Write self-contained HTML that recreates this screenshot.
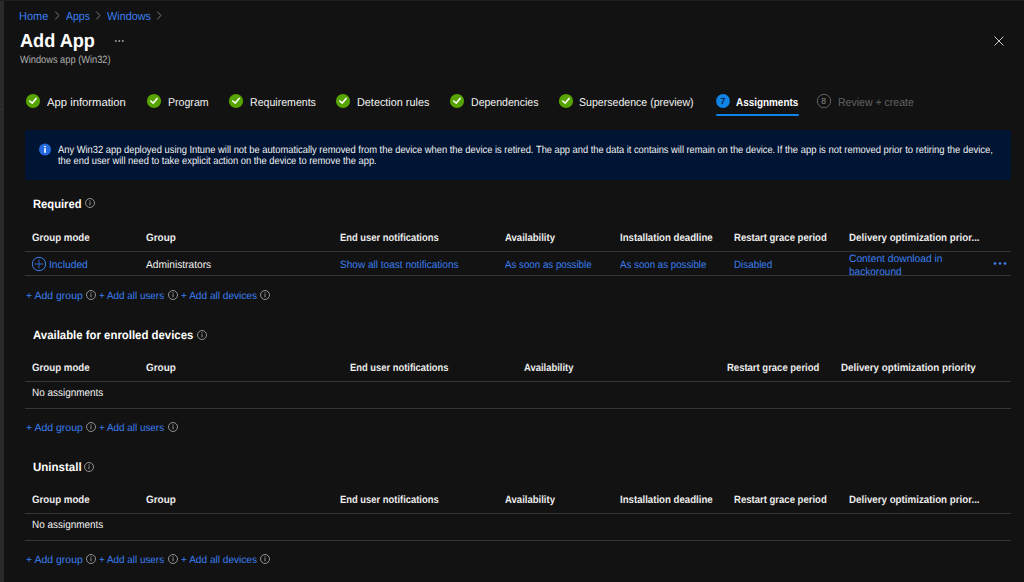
<!DOCTYPE html>
<html><head><meta charset="utf-8"><title>Add App</title>
<style>
html,body{margin:0;padding:0;}
body{width:1024px;height:582px;overflow:hidden;background:#121212;position:relative;font-family:"Liberation Sans",sans-serif;}
.t{position:absolute;white-space:nowrap;line-height:1;transform-origin:0 0;text-rendering:geometricPrecision;}
.a{position:absolute;}
</style></head><body>
<div class="a" style="left:0;top:0;width:1024px;height:1px;background:#1e1e1e"></div>
<div class="a" style="left:0;top:1px;width:4px;height:581px;background:#2a2a28"></div>
<div class="a" style="left:0;top:109px;width:4px;height:1px;background:#333331"></div>
<svg class="a" style="left:53.8px;top:11px" width="8" height="10"><polyline points="1.3,0.6 4.9,4.5 1.3,8.4" fill="none" stroke="#7a7a7a" stroke-width="1"/></svg>
<svg class="a" style="left:95.3px;top:11px" width="8" height="10"><polyline points="1.3,0.6 4.9,4.5 1.3,8.4" fill="none" stroke="#7a7a7a" stroke-width="1"/></svg>
<svg class="a" style="left:156.2px;top:11px" width="8" height="10"><polyline points="1.3,0.6 4.9,4.5 1.3,8.4" fill="none" stroke="#7a7a7a" stroke-width="1"/></svg>
<svg class="a" style="left:113px;top:38px" width="14" height="6"><circle cx="2.8" cy="3" r="1.0" fill="#9a9a9a"/><circle cx="6.3" cy="3" r="1.0" fill="#9a9a9a"/><circle cx="9.8" cy="3" r="1.0" fill="#9a9a9a"/></svg>
<svg class="a" style="left:992.5px;top:35px" width="12" height="12"><path d="M1.5 1.5 L10.5 10.5 M10.5 1.5 L1.5 10.5" stroke="#c8c8c8" stroke-width="1"/></svg>
<svg class="a" style="left:24.9px;top:93px" width="16" height="16"><circle cx="8" cy="8" r="7.1" fill="#57a300"/><polyline points="4.7,8.0 7.3,10.1 11.1,5.4" fill="none" stroke="#ffffff" stroke-width="1.6" stroke-linecap="round" stroke-linejoin="round"/></svg>
<svg class="a" style="left:145.9px;top:93px" width="16" height="16"><circle cx="8" cy="8" r="7.1" fill="#57a300"/><polyline points="4.7,8.0 7.3,10.1 11.1,5.4" fill="none" stroke="#ffffff" stroke-width="1.6" stroke-linecap="round" stroke-linejoin="round"/></svg>
<svg class="a" style="left:228.1px;top:93px" width="16" height="16"><circle cx="8" cy="8" r="7.1" fill="#57a300"/><polyline points="4.7,8.0 7.3,10.1 11.1,5.4" fill="none" stroke="#ffffff" stroke-width="1.6" stroke-linecap="round" stroke-linejoin="round"/></svg>
<svg class="a" style="left:335.2px;top:93px" width="16" height="16"><circle cx="8" cy="8" r="7.1" fill="#57a300"/><polyline points="4.7,8.0 7.3,10.1 11.1,5.4" fill="none" stroke="#ffffff" stroke-width="1.6" stroke-linecap="round" stroke-linejoin="round"/></svg>
<svg class="a" style="left:449.1px;top:93px" width="16" height="16"><circle cx="8" cy="8" r="7.1" fill="#57a300"/><polyline points="4.7,8.0 7.3,10.1 11.1,5.4" fill="none" stroke="#ffffff" stroke-width="1.6" stroke-linecap="round" stroke-linejoin="round"/></svg>
<svg class="a" style="left:558.3px;top:93px" width="16" height="16"><circle cx="8" cy="8" r="7.1" fill="#57a300"/><polyline points="4.7,8.0 7.3,10.1 11.1,5.4" fill="none" stroke="#ffffff" stroke-width="1.6" stroke-linecap="round" stroke-linejoin="round"/></svg>
<svg class="a" style="left:714.8px;top:93px" width="16" height="16"><circle cx="8" cy="8" r="6.9" fill="#0f84e6"/><text x="7.8" y="10.9" font-family="Liberation Sans" font-size="8.6" font-weight="700" fill="#0b1d3d" text-anchor="middle">7</text></svg>
<svg class="a" style="left:815.9px;top:93px" width="16" height="16"><circle cx="8" cy="8" r="6.7" fill="none" stroke="#6a6a6a" stroke-width="0.9"/><text x="7.7" y="11" font-family="Liberation Sans" font-size="8.6" fill="#8a8a8a" text-anchor="middle">8</text></svg>
<div class="a" style="left:715.5px;top:113.5px;width:83px;height:2px;border-radius:1px;background:#0f84e6"></div>
<div class="a" style="left:25px;top:130px;width:986px;height:50px;border-radius:2px;background:#001433"></div>
<svg class="a" style="left:38px;top:143px" width="14" height="14"><circle cx="7" cy="6.5" r="6" fill="#2469e0"/><rect x="6.2" y="5.2" width="1.6" height="4.6" fill="#fff"/><circle cx="7" cy="3.6" r="0.9" fill="#fff"/></svg>
<svg class="a" style="left:85.0px;top:198.4px" width="10" height="10"><circle cx="5" cy="5" r="4.5" fill="none" stroke="#a0a0a0" stroke-width="0.9"/><rect x="4.55" y="4.2" width="0.9" height="3" fill="#a8a8a8"/><circle cx="5" cy="2.9" r="0.55" fill="#a8a8a8"/></svg>
<svg class="a" style="left:196.8px;top:329.8px" width="10" height="10"><circle cx="5" cy="5" r="4.5" fill="none" stroke="#a0a0a0" stroke-width="0.9"/><rect x="4.55" y="4.2" width="0.9" height="3" fill="#a8a8a8"/><circle cx="5" cy="2.9" r="0.55" fill="#a8a8a8"/></svg>
<svg class="a" style="left:84.0px;top:462.2px" width="10" height="10"><circle cx="5" cy="5" r="4.5" fill="none" stroke="#a0a0a0" stroke-width="0.9"/><rect x="4.55" y="4.2" width="0.9" height="3" fill="#a8a8a8"/><circle cx="5" cy="2.9" r="0.55" fill="#a8a8a8"/></svg>
<svg class="a" style="left:86.3px;top:290.0px" width="10" height="10"><circle cx="5" cy="5" r="4.5" fill="none" stroke="#a0a0a0" stroke-width="0.9"/><rect x="4.55" y="4.2" width="0.9" height="3" fill="#a8a8a8"/><circle cx="5" cy="2.9" r="0.55" fill="#a8a8a8"/></svg>
<svg class="a" style="left:168.0px;top:290.0px" width="10" height="10"><circle cx="5" cy="5" r="4.5" fill="none" stroke="#a0a0a0" stroke-width="0.9"/><rect x="4.55" y="4.2" width="0.9" height="3" fill="#a8a8a8"/><circle cx="5" cy="2.9" r="0.55" fill="#a8a8a8"/></svg>
<svg class="a" style="left:86.3px;top:422.0px" width="10" height="10"><circle cx="5" cy="5" r="4.5" fill="none" stroke="#a0a0a0" stroke-width="0.9"/><rect x="4.55" y="4.2" width="0.9" height="3" fill="#a8a8a8"/><circle cx="5" cy="2.9" r="0.55" fill="#a8a8a8"/></svg>
<svg class="a" style="left:168.0px;top:422.0px" width="10" height="10"><circle cx="5" cy="5" r="4.5" fill="none" stroke="#a0a0a0" stroke-width="0.9"/><rect x="4.55" y="4.2" width="0.9" height="3" fill="#a8a8a8"/><circle cx="5" cy="2.9" r="0.55" fill="#a8a8a8"/></svg>
<svg class="a" style="left:86.3px;top:554.2px" width="10" height="10"><circle cx="5" cy="5" r="4.5" fill="none" stroke="#a0a0a0" stroke-width="0.9"/><rect x="4.55" y="4.2" width="0.9" height="3" fill="#a8a8a8"/><circle cx="5" cy="2.9" r="0.55" fill="#a8a8a8"/></svg>
<svg class="a" style="left:168.0px;top:554.2px" width="10" height="10"><circle cx="5" cy="5" r="4.5" fill="none" stroke="#a0a0a0" stroke-width="0.9"/><rect x="4.55" y="4.2" width="0.9" height="3" fill="#a8a8a8"/><circle cx="5" cy="2.9" r="0.55" fill="#a8a8a8"/></svg>
<svg class="a" style="left:260.0px;top:290.0px" width="10" height="10"><circle cx="5" cy="5" r="4.5" fill="none" stroke="#a0a0a0" stroke-width="0.9"/><rect x="4.55" y="4.2" width="0.9" height="3" fill="#a8a8a8"/><circle cx="5" cy="2.9" r="0.55" fill="#a8a8a8"/></svg>
<svg class="a" style="left:260.0px;top:554.2px" width="10" height="10"><circle cx="5" cy="5" r="4.5" fill="none" stroke="#a0a0a0" stroke-width="0.9"/><rect x="4.55" y="4.2" width="0.9" height="3" fill="#a8a8a8"/><circle cx="5" cy="2.9" r="0.55" fill="#a8a8a8"/></svg>
<div class="a" style="left:25px;top:251px;width:986px;height:1px;background:#363636"></div>
<div class="a" style="left:25px;top:275px;width:986px;height:1px;background:#363636"></div>
<div class="a" style="left:25px;top:381px;width:986px;height:1px;background:#363636"></div>
<div class="a" style="left:25px;top:408px;width:986px;height:1px;background:#363636"></div>
<div class="a" style="left:25px;top:513px;width:986px;height:1px;background:#363636"></div>
<div class="a" style="left:25px;top:540px;width:986px;height:1px;background:#363636"></div>
<svg class="a" style="left:30.5px;top:256px" width="16" height="16"><circle cx="8" cy="8" r="6.7" fill="none" stroke="#3a7ff0" stroke-width="1"/><path d="M8 3.6 V12.4 M3.6 8 H12.4" stroke="#3370d8" stroke-width="0.9"/></svg>
<svg class="a" style="left:992px;top:261px" width="16" height="6"><circle cx="3.0" cy="2.5" r="1.35" fill="#3a86f4"/><circle cx="8.0" cy="2.5" r="1.35" fill="#3a86f4"/><circle cx="13.0" cy="2.5" r="1.35" fill="#3a86f4"/></svg>
<div class="a" style="left:849px;top:267px;width:120px;height:8px;overflow:hidden"><span style="position:absolute;left:0;top:-0.5px;white-space:nowrap;font-size:10.6px;line-height:10.6px;color:#3a7ff0;text-rendering:geometricPrecision;transform:scaleX(0.95);transform-origin:0 0;">backoround</span></div>
<span class="t" style="left:19.05px;top:11.18px;font-size:11.6px;font-weight:400;color:#3a7ff0;transform:scaleX(0.9467);">Home</span>
<span class="t" style="left:65.50px;top:11.18px;font-size:11.6px;font-weight:400;color:#3a7ff0;transform:scaleX(0.9037);">Apps</span>
<span class="t" style="left:107.00px;top:11.18px;font-size:11.6px;font-weight:400;color:#3a7ff0;transform:scaleX(0.9362);">Windows</span>
<span class="t" style="left:19.80px;top:31.92px;font-size:19.0px;font-weight:700;color:#ffffff;transform:scaleX(0.9551);">Add App</span>
<span class="t" style="left:19.80px;top:55.03px;font-size:10.6px;font-weight:400;color:#b0b0b0;transform:scaleX(0.8738);">Windows app (Win32)</span>
<span class="t" style="left:46.60px;top:98.43px;font-size:11.3px;font-weight:400;color:#f2f2f2;transform:scaleX(0.9962);">App information</span>
<span class="t" style="left:167.70px;top:98.43px;font-size:11.3px;font-weight:400;color:#f2f2f2;transform:scaleX(0.9372);">Program</span>
<span class="t" style="left:249.60px;top:98.43px;font-size:11.3px;font-weight:400;color:#f2f2f2;transform:scaleX(0.9371);">Requirements</span>
<span class="t" style="left:356.80px;top:98.43px;font-size:11.3px;font-weight:400;color:#f2f2f2;transform:scaleX(0.9600);">Detection rules</span>
<span class="t" style="left:471.00px;top:98.43px;font-size:11.3px;font-weight:400;color:#f2f2f2;transform:scaleX(0.9347);">Dependencies</span>
<span class="t" style="left:579.20px;top:98.43px;font-size:11.3px;font-weight:400;color:#f2f2f2;transform:scaleX(0.9361);">Supersedence (preview)</span>
<span class="t" style="left:736.20px;top:98.43px;font-size:11.3px;font-weight:700;color:#ffffff;transform:scaleX(0.8775);">Assignments</span>
<span class="t" style="left:838.30px;top:98.43px;font-size:11.3px;font-weight:400;color:#626262;transform:scaleX(0.9321);">Review + create</span>
<span class="t" style="left:57.80px;top:146.20px;font-size:10.4px;font-weight:400;color:#f2f2f2;transform:scaleX(0.8996);">Any Win32 app deployed using Intune will not be automatically removed from the device when the device is retired.</span>
<span class="t" style="left:536.10px;top:146.20px;font-size:10.4px;font-weight:400;color:#f2f2f2;transform:scaleX(0.8925);">The app and the data it contains will remain on the device.</span>
<span class="t" style="left:776.99px;top:146.20px;font-size:10.4px;font-weight:400;color:#f2f2f2;transform:scaleX(0.9093);">If the app is not removed prior to retiring the device,</span>
<span class="t" style="left:57.80px;top:157.20px;font-size:10.4px;font-weight:400;color:#f2f2f2;transform:scaleX(0.8986);">the end user will need to take explicit action on the device to remove the app.</span>
<span class="t" style="left:33.40px;top:197.84px;font-size:12.0px;font-weight:700;color:#ffffff;transform:scaleX(0.9327);">Required</span>
<span class="t" style="left:32.00px;top:233.03px;font-size:10.6px;font-weight:700;color:#ececec;transform:scaleX(0.9159);">Group mode</span>
<span class="t" style="left:146.40px;top:233.03px;font-size:10.6px;font-weight:700;color:#ececec;transform:scaleX(0.9375);">Group</span>
<span class="t" style="left:339.60px;top:233.03px;font-size:10.6px;font-weight:700;color:#ececec;transform:scaleX(0.8865);">End user notifications</span>
<span class="t" style="left:504.60px;top:233.03px;font-size:10.6px;font-weight:700;color:#ececec;transform:scaleX(0.9000);">Availability</span>
<span class="t" style="left:619.50px;top:233.03px;font-size:10.6px;font-weight:700;color:#ececec;transform:scaleX(0.9098);">Installation deadline</span>
<span class="t" style="left:734.30px;top:233.03px;font-size:10.6px;font-weight:700;color:#ececec;transform:scaleX(0.9000);">Restart grace period</span>
<span class="t" style="left:848.90px;top:233.03px;font-size:10.6px;font-weight:700;color:#ececec;transform:scaleX(0.9204);">Delivery optimization prior...</span>
<span class="t" style="left:26.20px;top:292.20px;font-size:10.4px;font-weight:400;color:#3a7ff0;transform:scaleX(1.0089);">+ Add group</span>
<span class="t" style="left:99.40px;top:292.20px;font-size:10.4px;font-weight:400;color:#3a7ff0;transform:scaleX(0.9507);">+ Add all users</span>
<span class="t" style="left:181.10px;top:292.20px;font-size:10.4px;font-weight:400;color:#3a7ff0;transform:scaleX(0.9705);">+ Add all devices</span>
<span class="t" style="left:49.43px;top:260.03px;font-size:10.6px;font-weight:400;color:#3a7ff0;transform:scaleX(0.9692);">Included</span>
<span class="t" style="left:339.60px;top:260.03px;font-size:10.6px;font-weight:400;color:#3a7ff0;transform:scaleX(0.9496);">Show all toast notifications</span>
<span class="t" style="left:504.60px;top:260.03px;font-size:10.6px;font-weight:400;color:#3a7ff0;transform:scaleX(0.9191);">As soon as possible</span>
<span class="t" style="left:619.50px;top:260.03px;font-size:10.6px;font-weight:400;color:#3a7ff0;transform:scaleX(0.9170);">As soon as possible</span>
<span class="t" style="left:734.30px;top:260.03px;font-size:10.6px;font-weight:400;color:#3a7ff0;transform:scaleX(0.9293);">Disabled</span>
<span class="t" style="left:849.00px;top:254.03px;font-size:10.6px;font-weight:400;color:#3a7ff0;transform:scaleX(0.9688);">Content download in</span>
<span class="t" style="left:146.30px;top:260.03px;font-size:10.6px;font-weight:400;color:#f2f2f2;transform:scaleX(0.9618);">Administrators</span>
<span class="t" style="left:33.40px;top:328.84px;font-size:12.0px;font-weight:700;color:#ffffff;transform:scaleX(0.9491);">Available for enrolled devices</span>
<span class="t" style="left:32.00px;top:363.03px;font-size:10.6px;font-weight:700;color:#ececec;transform:scaleX(0.9159);">Group mode</span>
<span class="t" style="left:146.40px;top:363.03px;font-size:10.6px;font-weight:700;color:#ececec;transform:scaleX(0.9375);">Group</span>
<span class="t" style="left:349.80px;top:363.03px;font-size:10.6px;font-weight:700;color:#ececec;transform:scaleX(0.8847);">End user notifications</span>
<span class="t" style="left:523.50px;top:363.03px;font-size:10.6px;font-weight:700;color:#ececec;transform:scaleX(0.8893);">Availability</span>
<span class="t" style="left:726.70px;top:363.03px;font-size:10.6px;font-weight:700;color:#ececec;transform:scaleX(0.8961);">Restart grace period</span>
<span class="t" style="left:841.10px;top:363.03px;font-size:10.6px;font-weight:700;color:#ececec;transform:scaleX(0.9226);">Delivery optimization priority</span>
<span class="t" style="left:26.20px;top:424.20px;font-size:10.4px;font-weight:400;color:#3a7ff0;transform:scaleX(1.0089);">+ Add group</span>
<span class="t" style="left:99.40px;top:424.20px;font-size:10.4px;font-weight:400;color:#3a7ff0;transform:scaleX(0.9507);">+ Add all users</span>
<span class="t" style="left:31.90px;top:388.03px;font-size:10.6px;font-weight:400;color:#f2f2f2;transform:scaleX(0.9382);">No assignments</span>
<span class="t" style="left:33.40px;top:460.84px;font-size:12.0px;font-weight:700;color:#ffffff;transform:scaleX(0.9600);">Uninstall</span>
<span class="t" style="left:32.00px;top:495.03px;font-size:10.6px;font-weight:700;color:#ececec;transform:scaleX(0.9159);">Group mode</span>
<span class="t" style="left:146.40px;top:495.03px;font-size:10.6px;font-weight:700;color:#ececec;transform:scaleX(0.9375);">Group</span>
<span class="t" style="left:339.60px;top:495.03px;font-size:10.6px;font-weight:700;color:#ececec;transform:scaleX(0.8865);">End user notifications</span>
<span class="t" style="left:504.60px;top:495.03px;font-size:10.6px;font-weight:700;color:#ececec;transform:scaleX(0.9000);">Availability</span>
<span class="t" style="left:619.50px;top:495.03px;font-size:10.6px;font-weight:700;color:#ececec;transform:scaleX(0.9098);">Installation deadline</span>
<span class="t" style="left:734.30px;top:495.03px;font-size:10.6px;font-weight:700;color:#ececec;transform:scaleX(0.9000);">Restart grace period</span>
<span class="t" style="left:848.90px;top:495.03px;font-size:10.6px;font-weight:700;color:#ececec;transform:scaleX(0.9204);">Delivery optimization prior...</span>
<span class="t" style="left:26.20px;top:556.20px;font-size:10.4px;font-weight:400;color:#3a7ff0;transform:scaleX(1.0089);">+ Add group</span>
<span class="t" style="left:99.40px;top:556.20px;font-size:10.4px;font-weight:400;color:#3a7ff0;transform:scaleX(0.9507);">+ Add all users</span>
<span class="t" style="left:181.10px;top:556.20px;font-size:10.4px;font-weight:400;color:#3a7ff0;transform:scaleX(0.9705);">+ Add all devices</span>
<span class="t" style="left:31.90px;top:520.03px;font-size:10.6px;font-weight:400;color:#f2f2f2;transform:scaleX(0.9382);">No assignments</span>
</body></html>
